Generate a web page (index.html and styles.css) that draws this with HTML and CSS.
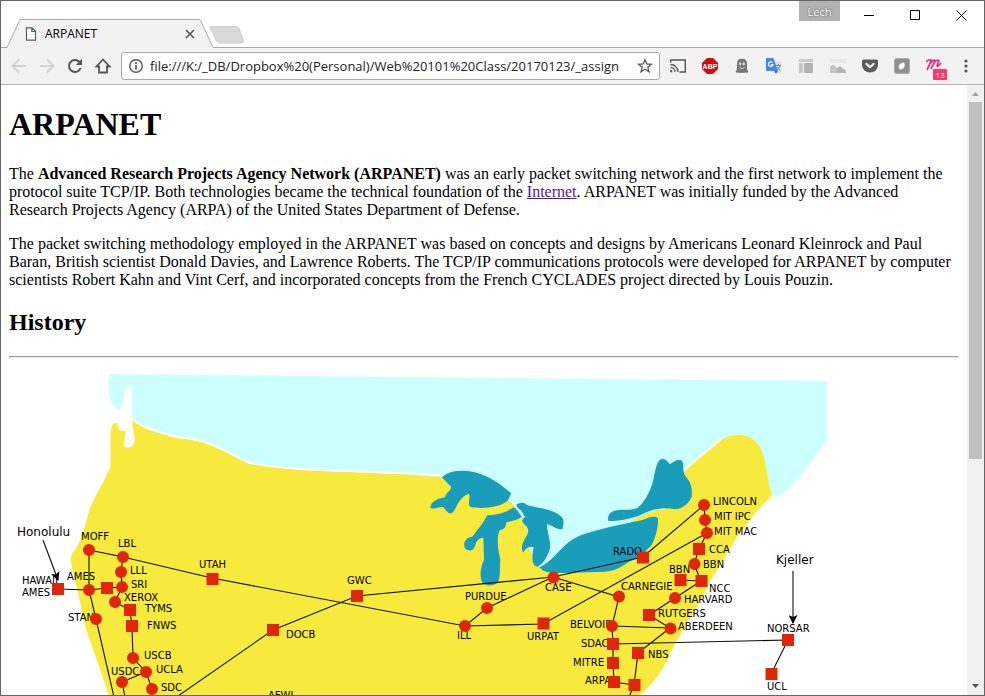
FILE: index.html
```html
<!DOCTYPE html>
<html lang="en">
<head>
<meta charset="utf-8">
<title>ARPANET</title>
<link rel="stylesheet" href="styles.css">
</head>
<body>
<div class="window">
  <header class="titlebar">
    <div class="tab">
      <svg class="tab-shape" viewBox="0 0 206 30" preserveAspectRatio="none" aria-hidden="true"><path d="M0 28.500L13 .5H193L206 28.500V30H0Z" fill="#f2f2f2"/><path d="M0 28.500L12.500 1.500Q13 .5 14 .5H192Q193 .5 193.500 1.500L206 28.500" fill="none" stroke="#a9a9a9"/></svg>
      <svg class="page-icon" viewBox="0 0 12 14" aria-hidden="true"><path d="M1.500 .8H7L10.500 4.300V13.200H1.500ZM6.800 1V4.500H10.300" fill="#fff" stroke="#5a5a5a" stroke-width="1.200"/></svg>
      <span class="tab-title">ARPANET</span>
      <button class="tab-close" aria-label="Close tab"><svg viewBox="0 0 10 10"><path d="M1 1L9 9M9 1L1 9" stroke="#555" stroke-width="1.600"/></svg></button>
    </div>
    <button class="new-tab" aria-label="New tab"><svg viewBox="0 0 36 18"><path d="M2 .5H27Q29 .5 30 2.500L34.500 15Q35 17 33 17H11Q8.500 17 7.500 15L1 2Q.5 .5 2 .5Z" fill="#d8d8d8" stroke="#cecece"/></svg></button>
    <div class="controls">
      <button class="profile">Lech</button>
      <button class="control" aria-label="Minimize"><svg viewBox="0 0 11 11"><path d="M0 5.500H10" stroke="#000"/></svg></button>
      <button class="control" aria-label="Maximize"><svg viewBox="0 0 11 11"><path d="M.5 .5H9.500V9.500H.5Z" fill="none" stroke="#000"/></svg></button>
      <button class="control" aria-label="Close"><svg viewBox="0 0 11 11"><path d="M.5 .5L10.500 10.500M10.500 .5L.5 10.500" stroke="#000"/></svg></button>
    </div>
  </header>
  <nav class="toolbar" aria-label="Browser toolbar">
    <div class="navigation">
      <button class="icon" aria-label="Back" disabled><svg viewBox="0 0 16 16"><path d="M15 8H2M8 1.500L1.500 8L8 14.500" fill="none" stroke="#d1d1d1" stroke-width="1.800"/></svg></button>
      <button class="icon" aria-label="Forward" disabled><svg viewBox="0 0 16 16"><path d="M1 8H14M8 1.500L14.500 8L8 14.500" fill="none" stroke="#d1d1d1" stroke-width="1.800"/></svg></button>
      <button class="icon" aria-label="Reload"><svg viewBox="0 0 16 16"><path d="M13.600 10A6 6 0 1 1 12.300 3.800" fill="none" stroke="#555" stroke-width="2"/><path d="M15 .8V7H8.800Z" fill="#555"/></svg></button>
      <button class="icon" aria-label="Home"><svg viewBox="0 0 16 16"><path d="M8 1.500L1.500 8.500H4V14.500H12V8.500H14.500Z" fill="none" stroke="#555" stroke-width="1.800"/></svg></button>
    </div>
    <div class="omnibox">
      <button class="icon" aria-label="Page information"><svg viewBox="0 0 16 16"><circle cx="8" cy="8" r="6.300" fill="none" stroke="#555" stroke-width="1.400"/><path d="M8 7V11.500M8 4.300V5.900" stroke="#555" stroke-width="1.700"/></svg></button>
      <input class="address" aria-label="Address" value="file:///K:/_DB/Dropbox%20(Personal)/Web%20101%20Class/20170123/_assign">
      <button class="icon" aria-label="Bookmark"><svg viewBox="0 0 16 16"><path d="M8 1.800L9.800 6L14.300 6.300L10.800 9.300L12 13.800L8 11.300L4 13.800L5.200 9.300L1.700 6.300L6.200 6Z" fill="none" stroke="#555" stroke-width="1.300"/></svg></button>
    </div>
    <div class="extensions">
      <button class="icon" aria-label="Cast"><svg viewBox="0 0 16 16"><path d="M.7 4.500V2H15.300V14H9.500" fill="none" stroke="#555" stroke-width="1.400"/><path d="M.5 6.500A7.500 7.500 0 0 1 8 14M.5 9.500A4.500 4.500 0 0 1 5 14" fill="none" stroke="#555" stroke-width="1.300"/><path d="M.2 11.800A2.300 2.300 0 0 1 2.500 14.200H.2Z" fill="#555"/></svg></button>
      <button class="icon" aria-label="Adblock Plus"><svg viewBox="0 0 16 16"><path d="M5 0H11L16 5V11L11 16H5L0 11V5Z" fill="#c70d0d"/><text class="abp" x="8" y="11" text-anchor="middle">ABP</text></svg></button>
      <button class="icon" aria-label="Ghostery"><svg viewBox="0 0 16 16"><path d="M3 6C3 2 5 .7 8 .7S13 2 13 6V11L14.500 14Q12.500 15.500 11.300 14.200Q10 15.800 8 14.400Q6 15.800 4.700 14.200Q3.500 15.500 1.500 14L3 11Z" fill="#777"/><ellipse cx="6.200" cy="5.800" rx="1.100" ry="1.500" fill="#e8e8e8"/><ellipse cx="9.800" cy="5.800" rx="1.100" ry="1.500" fill="#e8e8e8"/><path d="M5.500 9.500Q8 12 10.500 9.500" fill="none" stroke="#ccc"/></svg></button>
      <button class="icon" aria-label="Translate"><svg viewBox="0 0 16 16"><path d="M7 3.500H15.500V15H11Z" fill="#e2e2e2"/><path d="M9.500 7.500H15M12.500 6V7.500M14 8Q13 11 10.500 12.500M11 9Q12 11.500 14.500 12.800" fill="none" stroke="#7d8b92"/><path d="M0 0H7.500L11.800 13H1Q0 13 0 12Z" fill="#4285f4"/><path d="M8 13H11.800L10 16Z" fill="#3367d6"/><path d="M6.500 4.600A2.300 2.300 0 1 0 7 6.700H4.800" fill="none" stroke="#fff" stroke-width="1.200"/></svg></button>
      <button class="icon" aria-label="Page layout"><svg viewBox="0 0 16 16"><path d="M1 1H15V4H1Z" fill="#cbcbcb"/><path d="M1 5H5V15H1Z" fill="#c6c6c6"/><path d="M6 5H15V15H6Z" fill="#b3b3b3"/></svg></button>
      <button class="icon" aria-label="Image tools"><svg viewBox="0 0 16 16"><path d="M0 1H16V5H0Z" fill="#e7e7e7"/><path d="M0 15V10.500Q0 7 3 7Q5 7 6 9L8 11L5 15Z" fill="#c6c6c6"/><path d="M5 15L7 11Q8 8 10.500 8.500Q12 9 13 11Q16 11 16 15Z" fill="#b4b4b4"/></svg></button>
      <button class="icon" aria-label="Pocket"><svg viewBox="0 0 16 16"><path d="M1.500 1.500H14.500Q16 1.500 16 3V7A8 7.500 0 0 1 0 7V3Q0 1.500 1.500 1.500Z" fill="#5b5b5b"/><path d="M4.500 6L8 9.300L11.500 6" fill="none" stroke="#fff" stroke-width="2.200" stroke-linecap="round" stroke-linejoin="round"/></svg></button>
      <button class="icon" aria-label="Leaf"><svg viewBox="0 0 16 16"><rect x=".5" y=".5" width="15" height="15" rx="2" fill="#8f8f8f" stroke="#aaa"/><path d="M10 4.500C11.500 7 10.500 11 7 11.500C4.500 11.500 4 8.500 5.500 6.500Q7 4.500 10 4.500Z" fill="#fff"/></svg></button>
      <button class="icon badge-host" aria-label="Notifications, 13"><svg viewBox="0 0 16 16"><path d="M0 4Q3 1 5 2Q4 7 1 12Q4 4 8 2Q10 2 8 5L5 11Q8 3 12 2Q14 2 12 5Q10 9 12 8L15 5" fill="none" stroke="#ee267c" stroke-width="1.600"/></svg><span class="badge">13</span></button>
      <button class="icon" aria-label="Menu"><svg viewBox="0 0 16 16"><g fill="#555"><circle cx="8" cy="3" r="1.600"/><circle cx="8" cy="8" r="1.600"/><circle cx="8" cy="13" r="1.600"/></g></svg></button>
    </div>
  </nav>
  <div class="viewport">
    <main class="document">
      <h1>ARPANET</h1>
      <p>The <b>Advanced Research Projects Agency Network (ARPANET)</b> was an early packet switching network and the first network to implement the protocol suite TCP/IP. Both technologies became the technical foundation of the <a href="#">Internet</a>. ARPANET was initially funded by the Advanced Research Projects Agency (ARPA) of the United States Department of Defense.</p>
      <p>The packet switching methodology employed in the ARPANET was based on concepts and designs by Americans Leonard Kleinrock and Paul Baran, British scientist Donald Davies, and Lawrence Roberts. The TCP/IP communications protocols were developed for ARPANET by computer scientists Robert Kahn and Vint Cerf, and incorporated concepts from the French CYCLADES project directed by Louis Pouzin.</p>
      <h2>History</h2>
      <hr>
      <svg class="map" width="830" height="340" viewBox="9 366 830 340" role="img" aria-label="Map of ARPANET nodes">
        <defs><marker id="arrow" viewBox="0 0 9 9" refX="8" refY="4.500" markerWidth="9" markerHeight="9" markerUnits="userSpaceOnUse" orient="auto"><path d="M0 0L9 4.500L0 9L2 4.500Z"/></marker></defs>
        <path fill="#cff" d="M110 374L827 381V440C816 456 797 482 782 494Q778 498 772 494L690 560H530L500 510L440 477L250 465L132 421V396Q132 386 128 384.500C124 387 125 400 123 406Q121 410 119 409.500C109 405 108 394 109 380Z"/>
        <path fill="#f7ea3c" d="M132 420Q141 427 150 430T177 438C198 440 206 443 213 446C232 454 239 460 250 463C270 468 310 471 350 472L410 474.500L442 477L480 500L508 500Q514 504 519 511L525 517L530 550L540 567L605 550L633 520Q650 510 665 509L685 470L721 440C733 433 749 433 757 443C767 455 766 477 772 495L757 511L737 537L710 582C700 603 682 630 672 650C664 668 657 680 640 695L630 706H112C105 682 97 661 88 635C83 620 81 604 77 588C73 573 69 560 72 553Q79 546 80 540C86 526 88 512 91 506C97 492 108 475 110.500 466V443C110 432 111 421 117 423C119 425 117 429 120 430Q123 431 126 431Z"/>
        <path fill="none" stroke="#fff" stroke-width="2" d="M132 419Q141 426 150 429T177 437C198 439 206 442 213 445C232 453 239 459 250 463C270 467 310 470 350 471L410 473.500L442 475.500M684 470L721 439"/>
        <path fill="#fff" d="M128.500 384C132 385 132.300 392 132.300 400V420C132 427 135 433 134.700 440C134 447 129 449 124 446.500C123 442 126 437 125.500 431C122 431 119 430 119 428C118 424 117 422 115 423L110 426L103 402L119 410C126 405 123 388 128.500 384Z"/>
        <path fill="#cff" d="M521 510L548 519L575 530L595 529L570 545L542 567L535 563L545 540Z"/>
        <g class="lakes">
          <path d="M96 82L123 110C124 123 108 127 105 141C85 147 63 151 61 174C75 180 88 168 100 172C112 186 118 195 127 188C140 178 145 140 177 131C183 145 170 163 182 171C215 178 275 172 294 151L304 130C260 91 210 60 155 62C125 62 105 72 96 82Z"/>
          <path d="M232 196C255 195 285 190 310 172Q331 184 336 199C325 210 305 214 289 217C288 236 280 238 268 242C259 270 265 300 271 330C268 360 273 380 263 398C250 409 224 410 216 396C208 376 212 350 222 330L220 263C205 265 199 272 195 288C190 307 172 303 165 295C158 278 168 261 187 260C201 240 220 220 232 196Z"/>
          <path d="M320 163C330 157 345 155 350 165C385 175 440 178 458 205C464 215 458 230 458 236C443 243 427 225 411 223C412 255 425 275 419 300C409 326 399 344 381 350C365 346 365 325 371 292C355 285 345 298 340 308C331 295 338 280 344 268C362 240 352 238 351 230C345 225 335 215 335 206C350 198 336 184 320 170Z"/>
          <path d="M388 352C440 330 457 270 530 250C590 230 660 218 700 209C720 200 740 197 744 206C745 230 738 260 725 285C700 310 688 322 655 337C625 357 610 365 570 366C510 365 435 376 400 362Z"/>
          <path d="M595 212C592 195 600 183 625 180C650 178 670 182 685 172C700 160 722 125 730 90C738 50 742 30 755 27C770 25 773 38 780 42C795 36 795 28 814 31C824 40 817 60 824 75C838 95 848 100 845 140C835 165 815 175 795 178C760 170 725 178 690 196C660 208 620 215 595 212Z"/>
        </g>
        <path d="M509 499Q514 503 518 510T524 517L521 520" fill="none" stroke="#dff" stroke-width="1.300"/>
        <path class="links" d="M58 589L89 590L107 588L122 587M89 550V590L96 619L114 697M89 550L123 557L121 572L122 587L115 602L130 610L132 626L133 658L146 672L152 689M146 672L122 682L125 697M123 557L212 578L465 626L487 608L553 577L643 557L704 505L705 520L707 533L699 549L694 564L701 581L675 598L649 615L670 628L638 653L634 685L629 697M178 696L273 630L357 596L553 577L619 597L612 626L613 644V663L614 682L634 685M465 626L543 624L707 533M680 580L701 581M612 626L670 628M613 644L788 640L771 674"/>
        <path class="links" d="M43 540L58 580" marker-end="url(#arrow)"/>
        <path class="links" d="M793 571V623" marker-end="url(#arrow)"/>
        <g class="labels">
          <text x="81" y="540">MOFF</text><text x="118" y="547">LBL</text><text x="130" y="574">LLL</text><text x="131" y="588">SRI</text><text x="124" y="601">XEROX</text><text x="145" y="612">TYMS</text><text x="147" y="629">FNWS</text><text x="67" y="580">AMES</text><text x="22" y="584">HAWAII</text><text x="22" y="596">AMES</text><text x="68" y="621">STAN</text><text x="144" y="659">USCB</text><text x="156" y="673">UCLA</text><text x="111" y="675">USDC</text><text x="161" y="691">SDC</text><text x="199" y="568">UTAH</text><text x="347" y="584">GWC</text><text x="286" y="638">DOCB</text><text x="268" y="699">AFWL</text><text x="465" y="600">PURDUE</text><text x="457" y="639">ILL</text><text x="545" y="591">CASE</text><text x="527" y="640">URPAT</text><text x="613" y="555">RADO</text><text x="621" y="590">CARNEGIE</text><text x="570" y="628">BELVOIR</text><text x="581" y="647">SDAC</text><text x="573" y="666">MITRE</text><text x="585" y="684">ARPA</text><text x="648" y="658">NBS</text><text x="713" y="505">LINCOLN</text><text x="714" y="520">MIT IPC</text><text x="714" y="535">MIT MAC</text><text x="709" y="553">CCA</text><text x="703" y="568">BBN</text><text x="669" y="573">BBN</text><text x="709" y="592">NCC</text><text x="684" y="603">HARVARD</text><text x="658" y="617">RUTGERS</text><text x="678" y="630">ABERDEEN</text><text x="767" y="632">NORSAR</text><text x="767" y="690">UCL</text>
          <text class="place" x="17" y="536">Honolulu</text><text class="place" x="776" y="564">Kjeller</text>
        </g>
        <path class="nodes round" d="M89 550h.01M123 557h.01M121 572h.01M122 587h.01M89 590h.01M115 602h.01M96 619h.01M133 658h.01M146 672h.01M122 682h.01M152 689h.01M465 626h.01M487 608h.01M553.500 577.500h.01M619 596.500h.01M612 626h.01M670.500 628.500h.01M675 598h.01M694.500 564h.01M704 505h.01M705 520h.01M707 533h.01"/>
        <path class="nodes square" d="M58 589h.01M107 588h.01M130 610h.01M132 626h.01M212.500 579h.01M273 630h.01M357 596h.01M543.500 623.500h.01M643 557.500h.01M699 549h.01M680.500 580h.01M701.500 581h.01M649 615h.01M613 644h.01M613 663h.01M614 682h.01M634.500 685h.01M638 653h.01M788 640h.01M771.500 674h.01"/>
      </svg>
    </main>
    <div class="scrollbar" aria-hidden="true">
      <svg class="scroll-arrow" viewBox="0 0 17 17"><path d="M5 11L8.500 7L12 11Z" fill="#a3a3a3"/></svg>
      <div class="track"><div class="thumb"></div></div>
      <svg class="scroll-arrow" viewBox="0 0 17 17"><path d="M5 6L8.500 10L12 6Z" fill="#505050"/></svg>
    </div>
  </div>
</div>
</body>
</html>
```
FILE: styles.css
```css
* { box-sizing: border-box; }
body { margin: 0; background: #fff; color: #000; }
button { padding: 0; border: 0; background: none; font: inherit; }
svg { display: block; }

.window {
  display: flex;
  flex-direction: column;
  height: 100vh;
  border: 1px solid #656565;
  overflow: hidden;
  font-family: "Open Sans", "Noto Sans", sans-serif;
}

.titlebar {
  display: flex;
  align-items: flex-end;
  flex: none;
  height: 47px;
  padding-left: 6px;
  border-bottom: 1px solid #a9a9a9;
}
.tab {
  position: relative;
  display: flex;
  align-items: center;
  width: 206px;
  height: 30px;
  margin-bottom: -2px;
  padding: 0 18px;
  font-size: 12px;
}
.tab-shape { position: absolute; inset: 0; width: 100%; height: 100%; }
.page-icon { position: relative; width: 12px; height: 14px; }
.tab-title { position: relative; flex: 1; padding-left: 8px; line-height: 16px; }
.tab-close { position: relative; width: 10px; height: 10px; }
.tab-close svg { width: 10px; height: 10px; }
.new-tab { margin-bottom: 3px; margin-left: -4px; }
.new-tab svg { width: 36px; height: 18px; }
.controls { display: flex; align-self: flex-start; margin-left: auto; }
.profile {
  width: 41px;
  height: 20px;
  margin-right: 6px;
  background: #b2b2b2;
  color: #fff;
  font-size: 11px;
  text-shadow: 0 0 2px #333;
}
.control { display: grid; place-items: center; width: 46px; height: 28px; }
.control svg { width: 11px; height: 11px; }

.toolbar {
  display: flex;
  align-items: center;
  flex: none;
  gap: 10px;
  height: 37px;
  padding: 0 10px;
  border-bottom: 1px solid #b3b3b3;
  background: #f2f2f2;
}
.navigation { display: flex; gap: 12px; }
.extensions { display: flex; gap: 16px; }
.icon { flex: none; width: 16px; height: 16px; }
.icon svg { width: 16px; height: 16px; }
.omnibox {
  display: flex;
  align-items: center;
  flex: 1;
  min-width: 0;
  height: 28px;
  padding: 0 6px;
  border: 1px solid #a9a9a9;
  border-radius: 3px;
  background: #fff;
}
.address {
  flex: 1;
  min-width: 0;
  padding: 0 0 0 6px;
  border: 0;
  outline: 0;
  background: none;
  color: #222;
  font-family: inherit;
  font-size: 13px;
}
.abp { fill: #fff; font: bold 7px "Liberation Sans", sans-serif; }
.badge-host { position: relative; }
.badge {
  position: absolute;
  top: 11px;
  left: 7px;
  width: 14px;
  height: 11px;
  border-radius: 1px;
  background: #f9386c;
  color: #fff;
  font-size: 8px;
  line-height: 11px;
  text-align: center;
}

.viewport { display: flex; flex: 1; min-height: 0; }
.document {
  flex: 1;
  min-width: 0;
  padding: 0 8px;
  overflow: hidden;
  font: 16px/18px "Liberation Serif", serif;
}
h1 { margin: 21px 0 22px; font-size: 32px; line-height: 37px; }
p { margin: 16px 0; }
h2 { margin: 20px 0; font-size: 24px; line-height: 27px; }
hr {
  margin: 8px 0;
  border: 1px solid;
  border-color: #9a9a9a #eee #eee #9a9a9a;
}
a { color: #551a8b; }

.map { max-width: 100%; }
.lakes { fill: #1a9dbb; transform: translate(410px, 450px) scale(.3333); }
.links { fill: none; stroke: #111; stroke-width: 1.1; }
.labels { font: 10px "DejaVu Sans", sans-serif; }
.place { font-size: 12px; }
.nodes { stroke: #df260b; stroke-width: 12; }
.round { stroke-linecap: round; }
.square { stroke-linecap: square; }

.scrollbar { display: flex; flex-direction: column; flex: none; width: 17px; background: #f0f0f0; }
.scroll-arrow { flex: none; width: 17px; height: 17px; }
.track { flex: 1; padding: 0 2px; }
.thumb { height: 62%; background: #c1c1c1; }
```
